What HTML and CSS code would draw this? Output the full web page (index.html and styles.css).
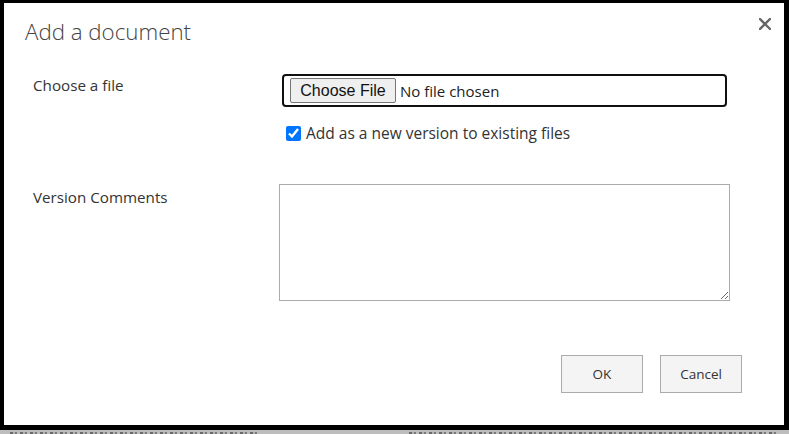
FILE: index.html
```html
<!DOCTYPE html>
<html lang="en">
<head>
<meta charset="utf-8">
<title>Add a document</title>
<link rel="stylesheet" href="styles.css">
</head>
<body>
<div class="frame">
  <div class="dialog">
    <div class="dialog-head">
      <h1 class="dialog-title">Add a document</h1>
      <button class="close" aria-label="Close">
        <svg width="12" height="12" viewBox="0 0 12 12"><path d="M1 1 L11 11 M11 1 L1 11" stroke="#666" stroke-width="2.4" stroke-linecap="square"/></svg>
      </button>
    </div>
    <div class="form">
      <div class="label label-file">Choose a file</div>
      <div class="control">
        <div class="file-box">
          <span class="file-btn">Choose File</span>
          <span class="file-none">No file chosen</span>
        </div>
        <label class="check-row">
          <input type="checkbox" class="check" checked>
          <span>Add as a new version to existing files</span>
        </label>
      </div>
      <div class="label label-comments">Version Comments</div>
      <div class="control">
        <textarea class="comments"></textarea>
      </div>
    </div>
    <div class="actions">
      <button class="btn">OK</button>
      <button class="btn">Cancel</button>
    </div>
  </div>
  <div class="gap"></div>
  <div class="under" aria-hidden="true">
    <div class="under-blur under-left"></div>
    <div class="under-blur under-right"></div>
  </div>
</div>
</body>
</html>
```

FILE: styles.css
```css
html, body {
  margin: 0;
  padding: 0;
  background: #000;
  height: 434px;
  overflow: hidden;
}

.frame {
  padding: 3px 5px 0 4px;
}

.dialog {
  background: #fff;
  height: 422px;
  font-family: "Open Sans", "Noto Sans", sans-serif;
  color: #333;
}

.dialog-head {
  display: flex;
  justify-content: space-between;
  align-items: flex-start;
  padding: 14px 13px 0 21px;
}

.dialog-title {
  margin: 0;
  font-size: 22.3px;
  font-weight: 300;
  color: #444;
  line-height: 30px;
}

.close {
  border: 0;
  background: none;
  padding: 0;
  margin-top: 1px;
  width: 12px;
  height: 12px;
  display: flex;
}

.form {
  display: grid;
  grid-template-columns: 248px 451px;
  padding: 27px 0 0 29px;
  row-gap: 41px;
}

.label {
  font-size: 15.2px;
  color: #333;
  line-height: 20px;
}

.label-file { padding-top: 1px; }
.label-comments { padding-top: 3px; }

.control {
  display: flex;
  flex-direction: column;
}

.file-box {
  margin-left: 1px;
  width: 435px;
  height: 29px;
  border: 2px solid #101010;
  border-radius: 4px;
  display: flex;
  align-items: center;
  padding-left: 6px;
}

.file-btn {
  font-family: "Liberation Sans", Arial, sans-serif;
  font-size: 16px;
  color: #111;
  background: #efefef;
  border: 1px solid #767676;
  border-radius: 2px;
  height: 23px;
  line-height: 23px;
  padding: 0 9px;
  width: 86px;
  text-align: center;
}

.file-none {
  font-size: 15px;
  color: #222;
  margin-left: 4px;
}

.check-row {
  display: flex;
  align-items: center;
  margin-top: 16px;
  margin-left: 5px;
  font-size: 15.5px;
  color: #333;
  line-height: 20px;
}

.check {
  width: 15px;
  height: 15px;
  margin: 0 5px 0 0;
  accent-color: #0075ff;
}

.comments {
  margin: 0 0 0 -2px;
  width: 451px;
  height: 117px;
  box-sizing: border-box;
  border: 1px solid #ababab;
  border-radius: 0;
  padding: 2px;
  display: block;
}

.actions {
  display: flex;
  justify-content: flex-end;
  gap: 17px;
  padding: 54px 42px 0 0;
}

.btn {
  width: 82px;
  height: 38px;
  background: #f4f4f4;
  border: 1px solid #ababab;
  border-radius: 0;
  font-family: "Open Sans", "Noto Sans", sans-serif;
  font-size: 13.5px;
  color: #333;
  padding: 0;
}

.gap {
  height: 5px;
}

.under {
  height: 4px;
  background: #bdbdbd;
  display: flex;
  justify-content: space-between;
  align-items: flex-end;
  margin: 0 -5px 0 -4px;
}

.under-blur {
  height: 2px;
  background: repeating-linear-gradient(90deg, #6a6a6a 0 3px, #b0b0b0 3px 5px, #7a7a7a 5px 7px, #bdbdbd 7px 10px);
}

.under-left { width: 250px; margin-left: 10px; }
.under-right { width: 370px; margin-right: 10px; }
```
